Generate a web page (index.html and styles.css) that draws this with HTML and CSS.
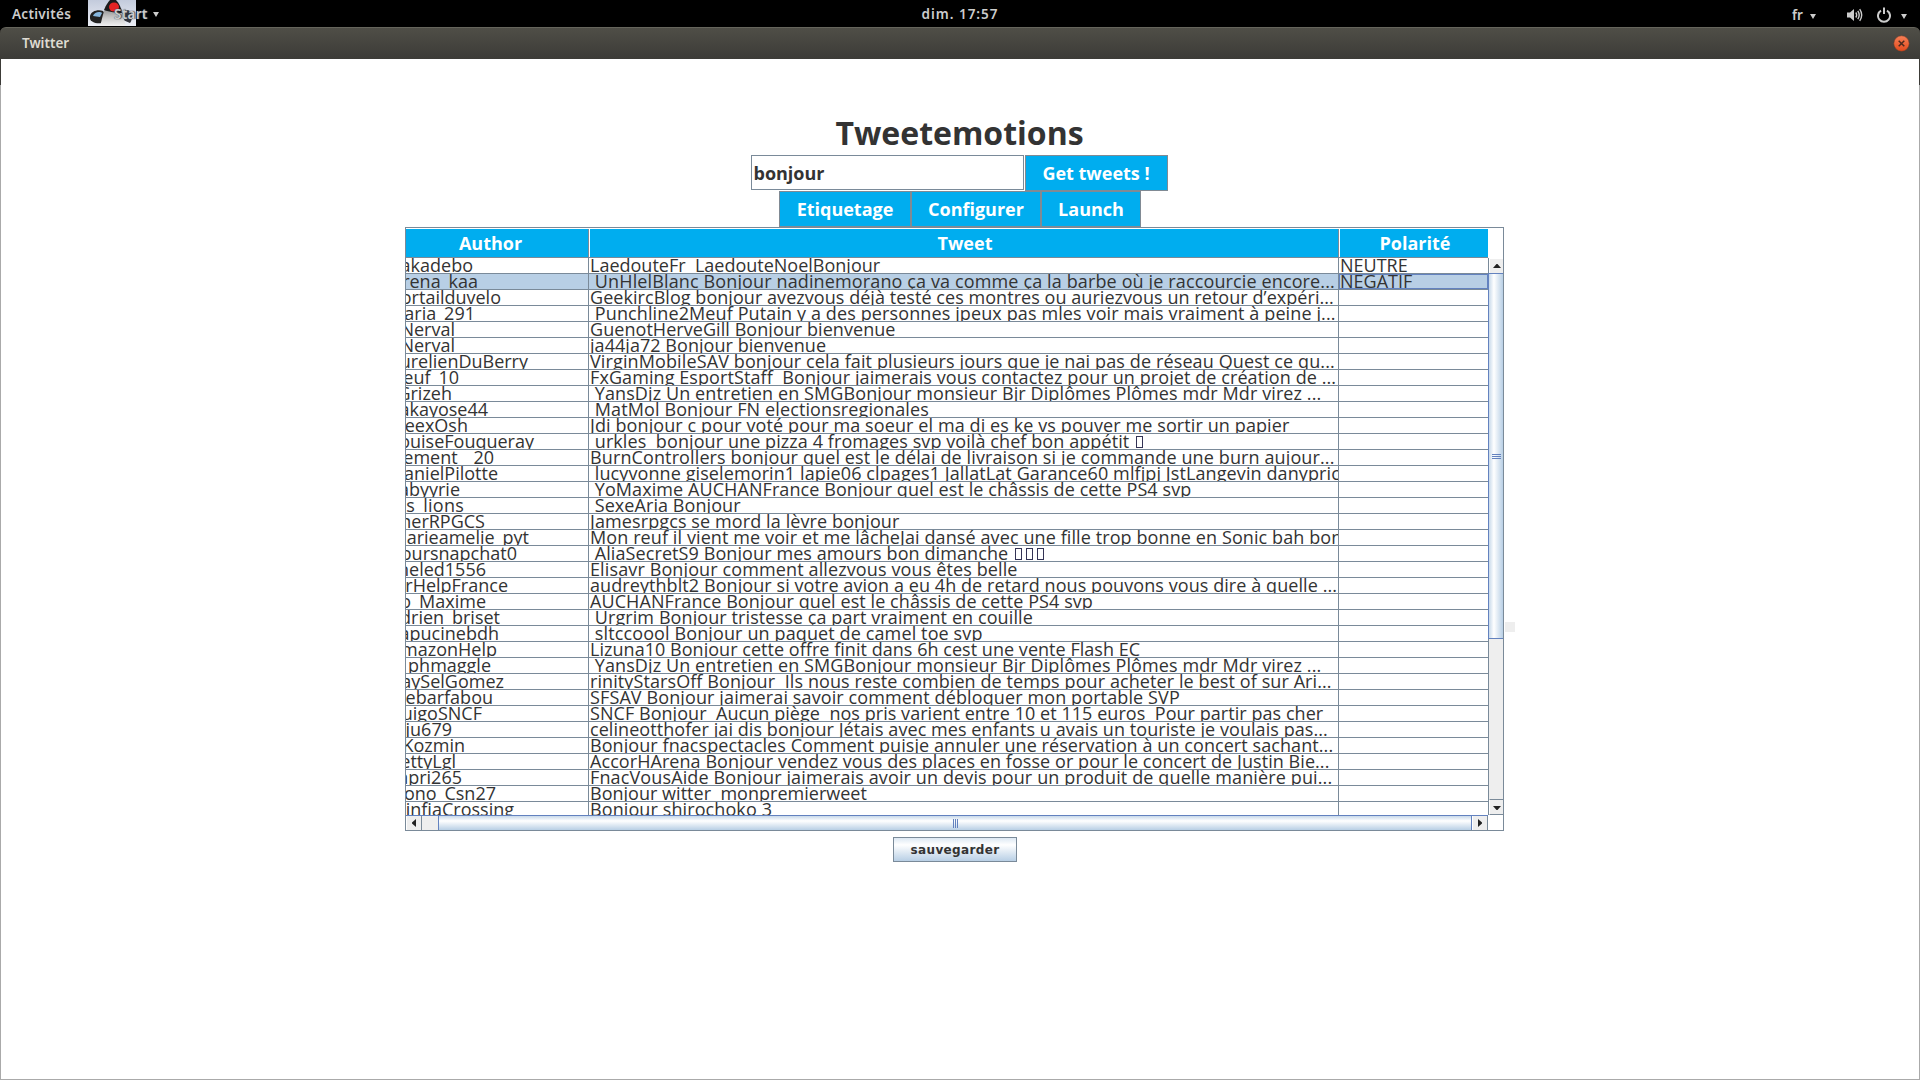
FILE: index.html
```html
<!DOCTYPE html>
<html lang="fr">
<head>
<meta charset="utf-8">
<title>Twitter</title>
<link rel="stylesheet" href="styles.css">
</head>
<body>
<header class="topbar">
  <span class="activities">Activités</span>
  <div class="app-menu">
    <svg class="duke" width="48" height="26" viewBox="0 0 48 26">
      <defs><linearGradient id="sky" x1="0" y1="0" x2="0" y2="1"><stop offset="0" stop-color="#c3cbdc"/><stop offset="1" stop-color="#eceff6"/></linearGradient>
      <linearGradient id="belly" x1="0" y1="0" x2="0" y2="1"><stop offset="0" stop-color="#8c8c8c"/><stop offset=".5" stop-color="#c4c4c4"/><stop offset="1" stop-color="#f2f2f2"/></linearGradient></defs>
      <rect width="48" height="26" fill="url(#sky)"/>
      <path d="M2 16C3 11 10 9 15 11L17 14L14 23C8 24 2 22 2 18Z" fill="#222"/>
      <path d="M5 16C6 12 12 11 14 13L12 17Z" fill="#86b7df"/>
      <path d="M34 12L40 10C45 12 45 19 42 23L35 20Z" fill="#33353c"/>
      <path d="M12 26C14 20 15 13 17 9L33 8C35 14 36 20 38 26Z" fill="url(#belly)"/>
      <path d="M16 10C18 5 20 2 22 0H28C31 3 33 7 34 13C29 13 21 12 16 10Z" fill="#1b1b1b"/>
      <ellipse cx="26" cy="7" rx="5" ry="4.5" fill="#e32424"/>
    </svg>
    <span class="app-name">Start</span>
    <i class="caret"></i>
  </div>
  <span class="clock">dim. 17:57</span>
  <div class="status">
    <span class="lang">fr</span><i class="caret"></i>
    <svg class="volume" width="16" height="14" viewBox="0 0 16 14"><path d="M0 4.5H3L7 1V13L3 9.500H0Z" fill="#ccc"/><path d="M8.800 4.500Q10.500 7 8.800 9.500M10.800 2.800Q13.600 7 10.800 11.200M12.700 1.200Q16.700 7 12.700 12.800" fill="none" stroke="#ccc" stroke-width="1.400"/></svg>
    <svg class="power" width="14" height="16" viewBox="0 0 14 16"><path d="M4 3.600A6 6 0 1 0 10 3.600M7 .5V7" fill="none" stroke="#ccc" stroke-width="2"/></svg>
    <i class="caret"></i>
  </div>
</header>
<div class="titlebar">
  <span class="window-title">Twitter</span>
  <svg class="close" width="17" height="17" viewBox="0 0 17 17"><defs><linearGradient id="cl" x1="0" y1="0" x2="0" y2="1"><stop offset="0" stop-color="#f68057"/><stop offset="1" stop-color="#e24a1c"/></linearGradient></defs><circle cx="8.500" cy="8.500" r="7.700" fill="url(#cl)" stroke="#7a3a25" stroke-width=".5"/><path d="M5.700 5.700L11.300 11.300M11.300 5.700L5.700 11.300" stroke="#4b2a1e" stroke-width="1.500"/></svg>
</div>
<main class="window">
  <h1>Tweetemotions</h1>
  <div class="search"><div class="field">bonjour</div><div class="btn get">Get tweets !</div></div>
  <div class="actions"><div class="btn tag">Etiquetage</div><div class="btn conf">Configurer</div><div class="btn launch">Launch</div></div>
  <div class="pane-line">
  <section class="pane">
    <div class="head"><div class="th author">Author</div><div class="th tweet">Tweet</div><div class="th pol">Polarité</div></div>
    <div class="corner"></div>
    <div class="rows">
      <div class="row"><b style="--end:115px">akadebo</b><p style="--ls:0px">LaedouteFr  LaedouteNoelBonjour</p><q>NEUTRE</q></div>
      <div class="row selected"><b style="--end:110px">rena_kaa</b><p style="--ls:.13px"> UnHlelBlanc Bonjour nadinemorano ça va comme ça la barbe où je raccourcie encore...</p><q>NEGATIF</q></div>
      <div class="row"><b style="--end:87px">ortailduvelo</b><p style="--ls:.05px">GeekircBlog bonjour avezvous déjà testé ces montres ou auriezvous un retour d’expéri...</p><q></q></div>
      <div class="row"><b style="--end:113px">aria_291</b><p style="--ls:.115px"> Punchline2Meuf Putain y a des personnes jpeux pas mles voir mais vraiment à peine j...</p><q></q></div>
      <div class="row"><b style="--end:133px">Nerval</b><p style="--ls:.055px">GuenotHerveGill Bonjour bienvenue</p><q></q></div>
      <div class="row"><b style="--end:133px">Nerval</b><p style="--ls:.045px">ja44ja72 Bonjour bienvenue</p><q></q></div>
      <div class="row"><b style="--end:60px">urelienDuBerry</b><p style="--ls:.12px">VirginMobileSAV bonjour cela fait plusieurs jours que je nai pas de réseau Quest ce qu...</p><q></q></div>
      <div class="row"><b style="--end:129px">euf_10</b><p style="--ls:.085px">FxGaming EsportStaff  Bonjour jaimerais vous contactez pour un projet de création de ...</p><q></q></div>
      <div class="row"><b style="--end:136px">Grizeh</b><p style="--ls:.1px"> YansDjz Un entretien en SMGBonjour monsieur Bjr Diplômes Plômes mdr Mdr virez ...</p><q></q></div>
      <div class="row"><b style="--end:100px">akayose44</b><p style="--ls:.11px"> MatMol Bonjour FN electionsregionales</p><q></q></div>
      <div class="row"><b style="--end:120px">eexOsh</b><p style="--ls:.1px">Jdi bonjour c pour voté pour ma soeur el ma di es ke vs pouver me sortir un papier</p><q></q></div>
      <div class="row"><b style="--end:54px">ouiseFouqueray</b><p style="--ls:.085px"> urkles  bonjour une pizza 4 fromages svp voilà chef bon appétit <i class="tofu"></i></p><q></q></div>
      <div class="row"><b style="--end:94px">ement__20</b><p style="--ls:.12px">BurnControllers bonjour quel est le délai de livraison si je commande une burn aujour...</p><q></q></div>
      <div class="row"><b style="--end:90px">anielPilotte</b><p style="--ls:.1px"> lucyvonne giselemorin1 lapie06 clpages1 JallatLat Garance60 mlfjpj JstLangevin danyprice</p><q></q></div>
      <div class="row"><b style="--end:128px">abyyrie</b><p style="--ls:.083px"> YoMaxime AUCHANFrance Bonjour quel est le châssis de cette PS4 svp</p><q></q></div>
      <div class="row"><b style="--end:124px;--als:.25px">s_lions</b><p style="--ls:.07px"> SexeAria Bonjour</p><q></q></div>
      <div class="row"><b style="--end:103px">nerRPGCS</b><p style="--ls:.105px">Jamesrpgcs se mord la lèvre bonjour</p><q></q></div>
      <div class="row"><b style="--end:59px">arieamelie_pyt</b><p style="--ls:.1px">Mon reuf il vient me voir et me lâcheJai dansé avec une fille trop bonne en Sonic bah bon</p><q></q></div>
      <div class="row"><b style="--end:71px">oursnapchat0</b><p style="--ls:.09px"> AliaSecretS9 Bonjour mes amours bon dimanche <i class="tofu"></i><i class="tofu"></i><i class="tofu"></i></p><q></q></div>
      <div class="row"><b style="--end:102px">heled1556</b><p style="--ls:.12px">Elisavr Bonjour comment allezvous vous êtes belle</p><q></q></div>
      <div class="row"><b style="--end:80px">rHelpFrance</b><p style="--ls:.077px">audreythblt2 Bonjour si votre avion a eu 4h de retard nous pouvons vous dire à quelle ...</p><q></q></div>
      <div class="row"><b style="--end:102px">o_Maxime</b><p style="--ls:.077px">AUCHANFrance Bonjour quel est le châssis de cette PS4 svp</p><q></q></div>
      <div class="row"><b style="--end:88px">drien_briset</b><p style="--ls:.09px"> Urgrim Bonjour tristesse ça part vraiment en couille</p><q></q></div>
      <div class="row"><b style="--end:89px">apucinebdh</b><p style="--ls:.12px"> sltccoool Bonjour un paquet de camel toe svp</p><q></q></div>
      <div class="row"><b style="--end:91px">mazonHelp</b><p style="--ls:.037px">Lizuna10 Bonjour cette offre finit dans 6h cest une vente Flash EC</p><q></q></div>
      <div class="row"><b style="--end:97px">phmaggle</b><p style="--ls:.1px"> YansDjz Un entretien en SMGBonjour monsieur Bjr Diplômes Plômes mdr Mdr virez ...</p><q></q></div>
      <div class="row"><b style="--end:84px">aySelGomez</b><p style="--ls:.09px">rinityStarsOff Bonjour  Ils nous reste combien de temps pour acheter le best of sur Ari...</p><q></q></div>
      <div class="row"><b style="--end:95px">ebarfabou</b><p style="--ls:.115px">SFSAV Bonjour jaimerai savoir comment débloquer mon portable SVP</p><q></q></div>
      <div class="row"><b style="--end:106px">uigoSNCF</b><p style="--ls:.05px">SNCF Bonjour  Aucun piège  nos pris varient entre 10 et 115 euros  Pour partir pas cher</p><q></q></div>
      <div class="row"><b style="--end:136px">ju679</b><p style="--ls:.068px">celineotthofer jai dis bonjour Jétais avec mes enfants u avais un touriste je voulais pas...</p><q></q></div>
      <div class="row"><b style="--end:123px">Kozmin</b><p style="--ls:.075px">Bonjour fnacspectacles Comment puisje annuler une réservation à un concert sachant...</p><q></q></div>
      <div class="row"><b style="--end:132px">ettyLgl</b><p style="--ls:.065px">AccorHArena Bonjour vendez vous des places en fosse or pour le concert de Justin Bie...</p><q></q></div>
      <div class="row"><b style="--end:126px">apri265</b><p style="--ls:.125px">FnacVousAide Bonjour jaimerais avoir un devis pour un produit de quelle manière pui...</p><q></q></div>
      <div class="row"><b style="--end:92px">ono_Csn27</b><p style="--ls:.02px">Bonjour witter  monpremierweet</p><q></q></div>
      <div class="row"><b style="--end:74px">infiaCrossing</b><p style="--ls:.1px">Bonjour shirochoko 3</p><q></q></div>
    </div>
    <div class="vbar">
      <div class="arrow"><svg width="8" height="4" viewBox="0 0 8 4"><path d="M0 4L3.500 0H4.500L8 4Z" fill="#222"/></svg></div>
      <div class="thumb"><i></i><i></i><i></i></div>
      <div class="track"></div>
      <div class="arrow"><svg width="8" height="4" viewBox="0 0 8 4"><path d="M0 0L3.500 4H4.500L8 0Z" fill="#222"/></svg></div>
    </div>
    <div class="hbar">
      <div class="arrow"><svg width="4" height="8" viewBox="0 0 4 8"><path d="M4 0L0 3.500V4.500L4 8Z" fill="#222"/></svg></div>
      <div class="track"></div>
      <div class="thumb"><i></i><i></i><i></i></div>
      <div class="arrow"><svg width="4" height="8" viewBox="0 0 4 8"><path d="M0 0L4 3.500V4.500L0 8Z" fill="#222"/></svg></div>
    </div>
    <div class="corner"></div>
  </section>
  <div class="nub"></div>
  </div>
  <div class="save">sauvegarder</div>
</main>
</body>
</html>
```
FILE: styles.css
```css
* { box-sizing: border-box; }
body {
  margin: 0; width: 1920px; height: 1080px; overflow: hidden;
  display: flex; flex-direction: column; background: #000;
  font-family: "Open Sans", "Noto Sans", sans-serif; color: #333;
}
.topbar {
  height: 27px; flex: none; background: #000; color: #ccc;
  display: grid; grid-template-columns: 88px 760px 224px 1fr;
  font: 600 13.5px/29px "Noto Sans", sans-serif;
}
.activities { padding-left: 12px; letter-spacing: .3px; }
.app-menu { display: flex; height: 26px; align-items: center; }
.duke { flex: none; }
.app-name { margin-left: -22px; padding-top: 2px; letter-spacing: .3px; text-shadow: 0 0 1px #345, 1px 0 1px #345; z-index: 1; }
.caret { width: 0; height: 0; border: 3.5px solid transparent; border-top: 5px solid #ccc; border-bottom: 0; margin: 3px 0 0 5px; }
.clock { text-align: center; letter-spacing: 1px; }
.status { display: flex; align-items: center; }
.lang { margin-left: 720px; padding-top: 1px; }
.status .caret { margin-left: 7px; }
.volume { margin-left: 31px; }
.power { margin-left: 14px; }
.status .caret:last-child { margin-left: 10px; }
.titlebar {
  height: 32px; flex: none; display: flex; align-items: center; justify-content: space-between;
  padding: 0 10px 0 22px; border-radius: 6px 6px 0 0; border-top: 1px solid #66655c;
  background: linear-gradient(#4f4e47, #3c3b37); color: #dfdbd2;
  font: 600 13.5px/28px "Noto Sans", sans-serif;
}
.window-title { height: 30px; }
.window {
  flex: 1; background: #fff; border: solid #aaa; border-width: 0 1px 1px;
  border-image: linear-gradient(#3c3b37 27px, #aaa 27px) 1;
  display: flex; flex-direction: column; align-items: center;
}
h1 { margin: 48px 1px 0 0; height: 48px; font-size: 32px; line-height: 52px; font-weight: 700; }
.search, .actions { display: flex; height: 36px; font-size: 18px; font-weight: 700; line-height: 34px; }
.search { margin-right: 2px; }
.field { width: 273px; height: 35px; border: 1px solid #7a8a99; padding-left: 2px; margin-right: 1px; }
.btn { height: 36px; border: 1px solid #808a94; background: #00adef; color: #fff; text-align: center; }
.get { width: 143px; }
.tag { width: 132px; }
.conf { width: 130px; }
.launch { width: 100px; }
.pane-line { display: flex; align-items: center; padding-right: 10px; }
.pane {
  width: 1099px; height: 604px; border: 1px solid #7a8a99; overflow: hidden;
  display: grid; grid-template: 30px 557px 15px / 1082px 15px;
}
.head { display: grid; grid-template-columns: 183px 750px 149px; padding-top: 1px; border-bottom: 1px solid #7a8a99; }
.th { background: #00adef; color: #fff; font-size: 18px; font-weight: 700; line-height: 29px; text-align: center; height: 28px; }
.author { padding-right: 13px; border-right: 1px solid #7a8a99; }
.th.tweet, .th.pol { border-left: 1px solid #fff; padding-left: 2px; }
.tweet { border-right: 1px solid #7a8a99; }
.rows { overflow: hidden; font-size: 18px; line-height: 14px; }
.row { display: grid; grid-template-columns: 183px 750px 149px; height: 16px; border-bottom: 1px solid #7a8a99; }
.row > * { margin: 0; height: 15px; overflow: hidden; white-space: pre; font-weight: 400; }
.row b { display: flex; justify-content: flex-end; padding-right: var(--end); letter-spacing: var(--als, 0); border-right: 1px solid #7a8a99; }
.row p { padding-left: 1px; letter-spacing: var(--ls); border-right: 1px solid #7a8a99; }
.row q { padding-left: 1px; quotes: none; }
.selected { background: #b8cfe5; }
.selected q { box-shadow: inset 0 0 0 1px #6382bf; }
.tofu { display: inline-block; width: 7px; height: 12px; border: 1px solid #333355; margin: 0 2px; }
.vbar { display: flex; flex-direction: column; border-left: 1px solid #7a8a99; }
.vbar .arrow, .hbar .arrow { flex: none; background: #eee; display: flex; align-items: center; justify-content: center; }
.vbar .arrow { height: 15px; border-top: 1px solid #fff; border-left: 1px solid #fff; }
.vbar .arrow:last-child { height: 16px; padding-top: 2px; border-top: 1px solid #7a8a99; border-bottom: 1px solid #7a8a99; }
.vbar .thumb {
  height: 366px; margin-left: -1px; border: solid #6382bf; border-width: 1px 0 1px 1px;
  background: linear-gradient(90deg, #c8d9ea, #fff 35%, #b8cfe5);
  display: flex; flex-direction: column; align-items: center; justify-content: center; gap: 1px;
}
.vbar .thumb i { width: 9px; height: 1px; background: #6382bf; }
.vbar .track { flex: 1; background: #eee; }
.hbar { display: flex; border-top: 1px solid #6382bf; }
.hbar .arrow { width: 16px; border-left: 1px solid #fff; border-right: 1px solid #7a8a99; }
.hbar .track { width: 16px; background: #eee; }
.hbar .thumb {
  flex: 1; border: solid #6382bf; border-width: 0 1px;
  background: linear-gradient(#c8d9ea, #fff 35%, #b8cfe5);
  display: flex; align-items: center; justify-content: center; gap: 1px;
}
.hbar .thumb i { width: 1px; height: 9px; background: #6382bf; }
.nub { width: 10px; height: 10px; margin: 195px -10px 0 1px; background: #eee; }
.save {
  width: 124px; height: 25px; margin: 6px 10px 0 0; border: 1px solid #7a8a99;
  background: linear-gradient(#dde8f3, #fff 30%, #b8cfe5);
  font: 700 12px/24px "DejaVu Sans", sans-serif; letter-spacing: .35px; text-align: center;
}
```
